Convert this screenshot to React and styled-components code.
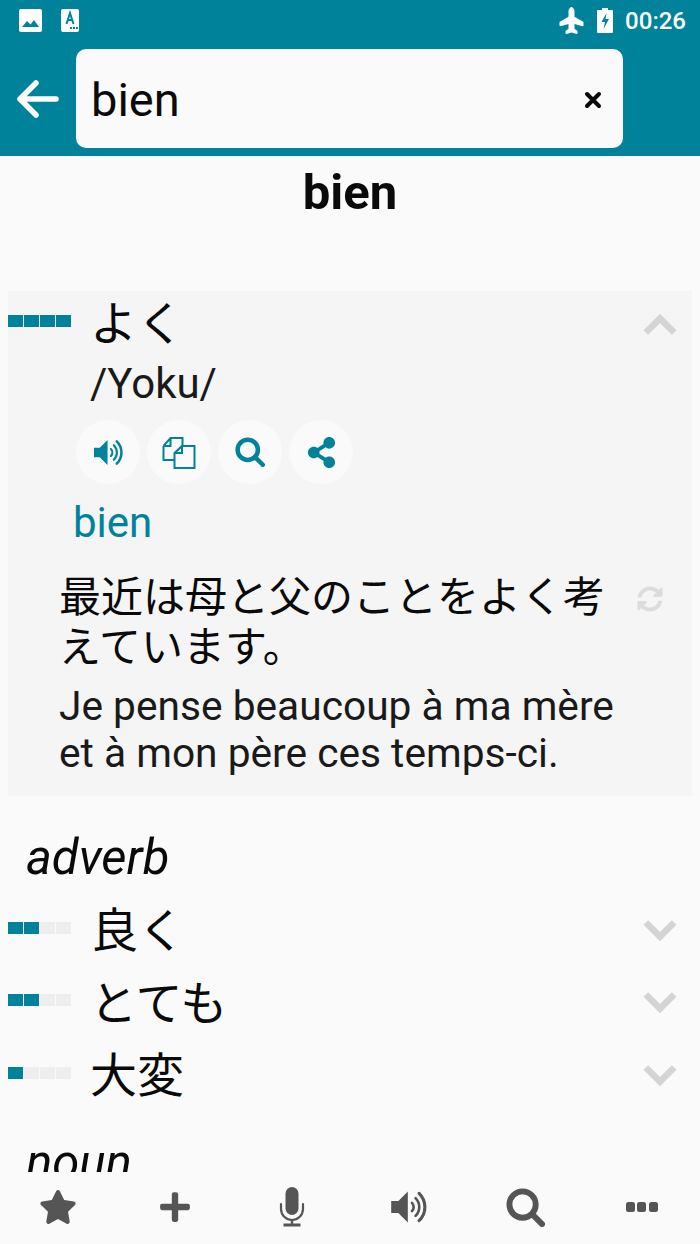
import React from 'react';
import styled, { createGlobalStyle } from 'styled-components';
import { FaStar, FaPlus, FaShareAlt, FaSyncAlt, FaPlane } from 'react-icons/fa';

const TEAL = '#00829b';
const JP = '"Noto Sans CJK JP", "Roboto", sans-serif';

const GlobalStyle = createGlobalStyle`
  html, body { margin: 0; padding: 0; background: #fafafa; }
  body { font-family: Roboto, "Noto Sans CJK JP", sans-serif; }
`;

const Page = styled.div`
  width: 700px;
  height: 1244px;
  display: flex;
  flex-direction: column;
  overflow: hidden;
  background: #fafafa;
`;

const Header = styled.header`
  background: ${TEAL};
  height: 156px;
  flex: none;
  display: flex;
  flex-direction: column;
`;

const StatusBar = styled.div`
  height: 41px;
  padding: 0 14px 0 19px;
  display: flex;
  align-items: center;
  color: #fff;
`;

const StatusLeft = styled.div`
  display: flex;
  align-items: center;
  gap: 19px;
  flex: 1;
`;

const StatusTime = styled.span`
  font-size: 24px;
  font-weight: 500;
  margin-left: 12px;
`;

const SearchRow = styled.div`
  height: 99px;
  margin-top: 8px;
  display: flex;
  align-items: center;
`;

const BackButton = styled.div`
  width: 76px;
  flex: none;
  display: flex;
  justify-content: center;
  box-sizing: border-box;
`;

const SearchBox = styled.div`
  width: 547px;
  height: 99px;
  box-sizing: border-box;
  background: #fafafa;
  border-radius: 10px;
  padding: 2px 21px 0 15px;
  display: flex;
  align-items: center;
  justify-content: space-between;
`;

const SearchText = styled.span`
  font-size: 47px;
  color: #0a0a0a;
`;

const Content = styled.main`
  flex: 1;
  min-height: 0;
  overflow: hidden;
`;

const Title = styled.h1`
  margin: 0;
  padding-top: 8px;
  height: 127px;
  box-sizing: border-box;
  text-align: center;
  font-size: 49px;
  line-height: 58px;
  font-weight: 700;
  color: #0a0a0a;
`;

const Card = styled.section`
  margin: 8px 8px 0;
  height: 505px;
  box-sizing: border-box;
  background: #f5f5f5;
  display: flex;
  flex-direction: column;
`;

const WordRow = styled.div`
  display: flex;
  align-items: center;
  height: ${p => p.$height}px;
`;

const Meter = styled.div`
  display: flex;
  gap: 1px;
  margin-left: ${p => p.$inset || 0}px;
  margin-bottom: ${p => p.$lift || 0}px;
  flex: none;
`;

const MeterCell = styled.span`
  width: 15px;
  height: 12px;
  background: ${p => (p.$on ? TEAL : '#eeeeee')};
`;

const Word = styled.span`
  flex: 1;
  font-family: ${JP};
  font-size: 47px;
  line-height: 60px;
  color: #0a0a0a;
  margin-left: ${p => p.$gap}px;
  margin-bottom: ${p => p.$lift}px;
`;

const Chevron = styled.div`
  flex: none;
  width: 34px;
  margin-top: ${p => p.$drop}px;
  margin-right: ${p => p.$right}px;
  display: flex;
  justify-content: center;
  color: #d4d4d4;
`;

const Reading = styled.div`
  font-size: 42px;
  line-height: 48px;
  color: #1a1a1a;
  margin: 9px 0 0 82px;
`;

const ActionRow = styled.div`
  display: flex;
  gap: 7px;
  margin: 12px 0 0 68px;
`;

const ActionButton = styled.div`
  width: 64px;
  height: 64px;
  border-radius: 50%;
  background: #fafafa;
  color: ${TEAL};
  display: flex;
  align-items: center;
  justify-content: center;
`;

const Translation = styled.div`
  font-size: 42px;
  line-height: 48px;
  color: ${TEAL};
  margin: 15px 0 0 65px;
`;

const ExampleRow = styled.div`
  display: flex;
  align-items: flex-start;
  margin: 22px 0 0 51px;
`;

const ExampleText = styled.div`
  width: 560px;
  font-family: ${JP};
  font-size: 42px;
  line-height: 50px;
  color: #0a0a0a;
`;

const ExampleIcon = styled.div`
  margin: 17px 0 0 18px;
  color: #dcdcdc;
  display: flex;
`;

const ExampleTranslation = styled.div`
  font-size: 40.7px;
  line-height: 47px;
  color: #1a1a1a;
  margin: 14px 60px 0 51px;
`;

const PartOfSpeech = styled.div`
  font-size: 49px;
  line-height: 58px;
  font-style: italic;
  color: #0a0a0a;
  margin: ${p => p.$top}px 0 0 26px;
`;

const SynonymList = styled.div`
  display: flex;
  flex-direction: column;
  margin-top: 6px;
`;

const BottomNav = styled.nav`
  flex: none;
  height: 72px;
  padding-top: 16px;
  box-sizing: border-box;
  background: #fafafa;
  display: grid;
  grid-template-columns: 116px 117px 117px 117px 117px 116px;
  align-items: start;
  color: #555;
`;

const NavItem = styled.div`
  display: flex;
  justify-content: center;
  height: 38px;
  align-items: center;
`;

const SpeakerIcon = ({ size }) => (
  <svg width={size} height={size} viewBox="0 0 32 32" fill="none" stroke="currentColor">
    <path d="M1 11h6l8-8v26l-8-8H1z" fill="currentColor" stroke="none" />
    <path d="M18.5 12.5a5 5 0 0 1 0 7" strokeWidth="2.2" strokeLinecap="round" />
    <path d="M21.5 8.5a10.5 10.5 0 0 1 0 15" strokeWidth="2.2" strokeLinecap="round" />
    <path d="M24.5 4.5a16 16 0 0 1 0 23" strokeWidth="2.6" strokeLinecap="round" />
  </svg>
);

const SearchIcon = ({ size }) => (
  <svg width={size} height={size} viewBox="0 0 40 40" fill="none" stroke="currentColor" strokeWidth="6">
    <circle cx="17" cy="17" r="13.5" />
    <path d="M27 27l10 10" strokeLinecap="round" />
  </svg>
);

const CopyIcon = () => (
  <svg width="34" height="33" viewBox="0 0 34 33" fill="none" stroke="currentColor" strokeWidth="2">
    <path d="M1.5 10 8.5 2h12v8M1.5 10v14h11M1.5 10h7V2" />
    <path d="M12.5 17 20 10h12.5v22h-20z" fill="#fafafa" />
    <path d="M12.5 17h7.5v-7" />
  </svg>
);

const MicIcon = () => (
  <svg width="26" height="40" viewBox="0 0 26 40" fill="none" stroke="currentColor">
    <rect x="6.5" y="0" width="13" height="28" rx="6.5" fill="currentColor" stroke="none" />
    <path d="M2 17v5a11 11 0 0 0 22 0v-5" strokeWidth="2.2" strokeLinecap="round" />
    <path d="M13 33v4" strokeWidth="2.4" />
    <path d="M4.5 38h17" strokeWidth="3" />
  </svg>
);

const DotsIcon = () => (
  <svg width="34" height="12" viewBox="0 0 34 12" fill="currentColor">
    <rect x="1" y="1" width="9" height="10" rx="2.5" />
    <rect x="12" y="1" width="9" height="10" rx="2.5" />
    <rect x="24" y="1" width="9" height="10" rx="2.5" />
  </svg>
);

const BackArrow = () => (
  <svg width="42" height="38" viewBox="0 0 42 38" fill="none" stroke="#fff" strokeWidth="5.5" strokeLinecap="round" strokeLinejoin="round">
    <path d="M19 3 3 19l16 16M3 19h36" />
  </svg>
);

const ClearIcon = () => (
  <svg width="18" height="18" viewBox="0 0 18 18" stroke="#0a0a0a" strokeWidth="4" strokeLinecap="round">
    <path d="M3 3l12 12M15 3 3 15" />
  </svg>
);

const ChevronIcon = ({ up }) => (
  <svg width="36" height="24" viewBox="0 0 36 24" fill="none" stroke="currentColor" strokeWidth="7">
    <path d={up ? 'M3 21 18 6l15 15' : 'M3 3l15 15L33 3'} />
  </svg>
);

const PictureNote = () => (
  <svg width="23" height="23" viewBox="0 0 23 23">
    <rect width="23" height="23" rx="2" fill="#fff" />
    <path d="M3 18l5-6 3.5 3.5L15 11l5 7z" fill={TEAL} />
  </svg>
);

const TranslateNote = () => (
  <svg width="18" height="23" viewBox="0 0 18 23">
    <rect width="18" height="23" rx="2" fill="#fff" />
    <path d="M5.5 15 9 4l3.5 11M7 11h4" fill="none" stroke={TEAL} strokeWidth="2" />
    <path d="M9 19h2M12 19h2M15 19h2" stroke={TEAL} strokeWidth="2" />
  </svg>
);

const BatteryIcon = () => (
  <svg width="16" height="25" viewBox="0 0 16 25">
    <path d="M5 0h6v2h4a1 1 0 0 1 1 1v21a1 1 0 0 1-1 1H1a1 1 0 0 1-1-1V3a1 1 0 0 1 1-1h4z" fill="#fff" />
    <path d="M9.5 5 4.5 14H8l-1.5 7 5.5-10H8.5z" fill={TEAL} />
  </svg>
);

const PlaneIcon = styled(FaPlane)`
  transform: rotate(-90deg);
  margin-right: 12px;
`;

const StrengthMeter = ({ level, inset, lift }) => (
  <Meter $inset={inset} $lift={lift}>
    {[0, 1, 2, 3].map(i => (
      <MeterCell key={i} $on={i < level} />
    ))}
  </Meter>
);

const synonyms = [
  { word: '良く', level: 2, gap: 20 },
  { word: 'とても', level: 2, gap: 19 },
  { word: '大変', level: 1, gap: 19 },
];

const App = () => (
  <Page>
    <GlobalStyle />
    <Header>
      <StatusBar>
        <StatusLeft>
          <PictureNote />
          <TranslateNote />
        </StatusLeft>
        <PlaneIcon size={27} />
        <BatteryIcon />
        <StatusTime>00:26</StatusTime>
      </StatusBar>
      <SearchRow>
        <BackButton>
          <BackArrow />
        </BackButton>
        <SearchBox>
          <SearchText>bien</SearchText>
          <ClearIcon />
        </SearchBox>
      </SearchRow>
    </Header>
    <Content>
      <Title>bien</Title>
      <Card>
        <WordRow $height={60}>
          <StrengthMeter level={4} />
          <Word $gap={19} $lift={2}>よく</Word>
          <Chevron $drop={5} $right={15}><ChevronIcon up /></Chevron>
        </WordRow>
        <Reading>/Yoku/</Reading>
        <ActionRow>
          <ActionButton><SpeakerIcon size={31} /></ActionButton>
          <ActionButton><CopyIcon /></ActionButton>
          <ActionButton><SearchIcon size={30} /></ActionButton>
          <ActionButton><FaShareAlt size={31} /></ActionButton>
        </ActionRow>
        <Translation>bien</Translation>
        <ExampleRow>
          <ExampleText>最近は母と父のことをよく考えています。</ExampleText>
          <ExampleIcon><FaSyncAlt size={26} /></ExampleIcon>
        </ExampleRow>
        <ExampleTranslation>Je pense beaucoup à ma mère et à mon père ces temps-ci.</ExampleTranslation>
      </Card>
      <PartOfSpeech $top={33}>adverb</PartOfSpeech>
      <SynonymList>
        {synonyms.map(s => (
          <WordRow key={s.word} $height={72.5}>
            <StrengthMeter level={s.level} inset={8} lift={3} />
            <Word $gap={s.gap} $lift={4}>{s.word}</Word>
            <Chevron $drop={3} $right={23}><ChevronIcon /></Chevron>
          </WordRow>
        ))}
      </SynonymList>
      <PartOfSpeech $top={23}>noun</PartOfSpeech>
    </Content>
    <BottomNav>
      <NavItem><FaStar size={38} /></NavItem>
      <NavItem><FaPlus size={34} /></NavItem>
      <NavItem><MicIcon /></NavItem>
      <NavItem><SpeakerIcon size={38} /></NavItem>
      <NavItem><SearchIcon size={39} /></NavItem>
      <NavItem><DotsIcon /></NavItem>
    </BottomNav>
  </Page>
);

export default App;
